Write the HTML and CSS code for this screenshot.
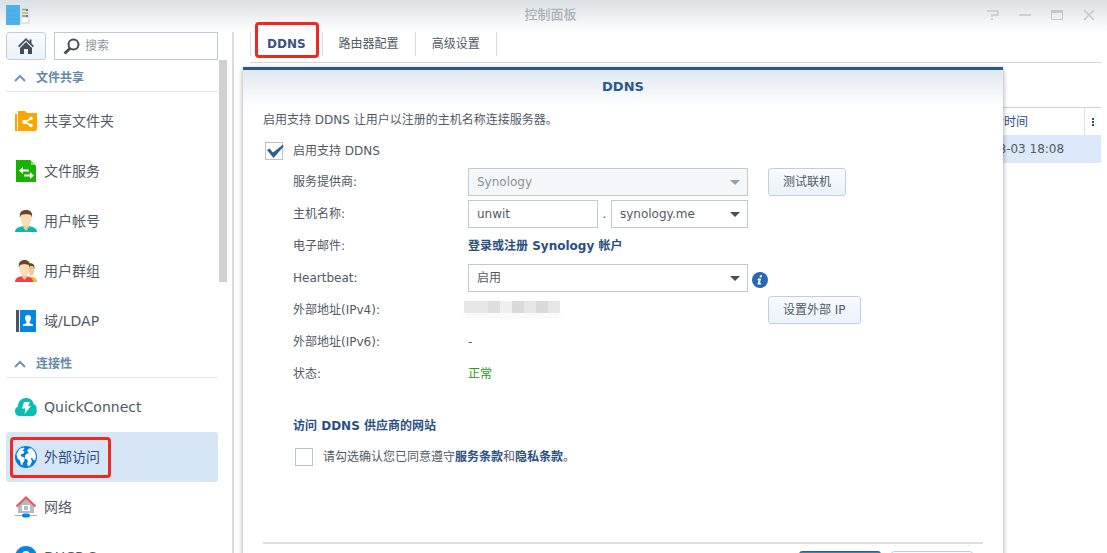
FILE: index.html
```html
<!DOCTYPE html>
<html lang="zh-CN">
<head>
    <meta charset="UTF-8">
    <meta name="viewport" content="width=device-width, initial-scale=1.0">
    <title>控制面板</title>
    <link rel="stylesheet" href="styles.css">
</head>
<body>
    <header class="titlebar">
        <svg class="app-icon" width="24" height="20" viewBox="0 0 24 20">
            <rect x="14" y="1" width="10" height="18" fill="#dfe5ea"/>
            <rect x="0" y="0" width="14" height="20" fill="#4db1ea"/>
            <path d="M2 5.500h9M2 10h9M2 14.500h9" stroke="#48a8e2"/>
            <path d="M16 4.500h4" stroke="#7fb36a" stroke-width="1.500"/>
            <path d="M16 8h6" stroke="#d9b25c" stroke-width="1.500"/>
            <path d="M16 11h4" stroke="#6a9cc4" stroke-width="1.500"/>
            <path d="M21 4v2M21 10v2" stroke="#5a7f9c" stroke-width="2"/>
            <rect x="16" y="13" width="6" height="4" fill="#fff"/>
        </svg>
        <h1 class="title">控制面板</h1>
        <div class="window-tools">
            <button class="tool" aria-label="帮助"><svg width="12" height="12" viewBox="0 0 12 12"><path d="M0 2h11v4H5v2M5 9v2" fill="none" stroke="#c3c8cc" stroke-width="1.500"/></svg></button>
            <button class="tool" aria-label="最小化"><svg width="12" height="12" viewBox="0 0 12 12"><path d="M0 6h12" stroke="#c3c8cc" stroke-width="1.500"/></svg></button>
            <button class="tool" aria-label="最大化"><svg width="12" height="12" viewBox="0 0 12 12"><path d="M.5 2v8.500h11V2" fill="none" stroke="#c3c8cc"/><path d="M0 2.500h12" stroke="#c3c8cc" stroke-width="3"/></svg></button>
            <button class="tool" aria-label="关闭"><svg width="12" height="12" viewBox="0 0 12 12"><path d="M1 1l10 10M11 1L1 11" stroke="#c3c8cc" stroke-width="1.500"/></svg></button>
        </div>
    </header>

    <div class="body">
        <aside class="sidebar">
            <div class="search-row">
                <button class="btn home" aria-label="主页">
                    <svg width="16" height="16" viewBox="0 0 16 16">
                        <path d="M8 0L0 8l1.200 1.200L8 2.500l6.800 6.700L16 8l-2.500-2.500V1.500h-2v2z" fill="#444e57"/>
                        <path d="M8 4L2 10v6h4v-5h4v5h4v-6z" fill="#444e57"/>
                    </svg>
                </button>
                <label class="search">
                    <svg width="17" height="17" viewBox="0 0 17 17"><circle cx="10.500" cy="6.500" r="5" fill="none" stroke="#444e57" stroke-width="2"/><path d="M7 10.500l-5.500 5" stroke="#444e57" stroke-width="3"/></svg>
                    <input type="text" placeholder="搜索" aria-label="搜索">
                </label>
            </div>
            <div class="list-wrap">
                <nav class="list">
                    <h2 class="group"><svg width="12" height="8" viewBox="0 0 12 8"><path d="M1 7l5-5 5 5" fill="none" stroke="#7595ad" stroke-width="2"/></svg>文件共享</h2>
                    <a class="item" href="#">
                        <svg width="22" height="22" viewBox="0 0 22 22"><path d="M0 4h2v16h19v1H0z" fill="#fba500"/><path d="M3 1h7l2 2h10v17H3z" fill="#fba500"/><path d="M16 8.500L10 12l6 3.500" fill="none" stroke="#fff" stroke-width="1.500"/><circle cx="9.500" cy="12" r="2.300" fill="#fff"/><circle cx="16" cy="8.500" r="1.800" fill="#fff"/><circle cx="16" cy="15.500" r="1.800" fill="#fff"/></svg>
                        <span>共享文件夹</span>
                    </a>
                    <a class="item" href="#">
                        <svg width="22" height="22" viewBox="0 0 22 22"><path d="M1 0h14l6 6v16H1z" fill="#1bb100"/><path d="M16 0l5 5h-5z" fill="#8ade78"/><path d="M4 10.500l4-3.500v2.500h6v2H8V14zM19 15.500l-4-3.500v2.500H9v2h6V19z" fill="#fff"/></svg>
                        <span>文件服务</span>
                    </a>
                    <a class="item" href="#">
                        <svg width="22" height="22" viewBox="0 0 22 22"><path d="M0 22c0-4 4-5 8-6h6c4 1 8 2 8 6z" fill="#11b5b0"/><path d="M8 13h6v4l-3 4-3-4z" fill="#f3c896"/><path d="M6 5h10v5c0 4-3 6-5 6s-5-2-5-6z" fill="#fbdcb4"/><path d="M5 8C4 2 7 0 11 0s7 2 6 8l-1-3c-3-1-7-1-10 0z" fill="#6a4526"/></svg>
                        <span>用户帐号</span>
                    </a>
                    <a class="item" href="#">
                        <svg width="22" height="22" viewBox="0 0 22 22"><path d="M13 17h5c3 1 4 2 4 5h-9z" fill="#f6b83c"/><path d="M13 6h6v5c0 3-2 5-4 5z" fill="#f3c896"/><path d="M13 4c4-2 7 0 6.500 5L18 6h-4z" fill="#6a4526"/><path d="M0 22c0-4 3-5 7-6h4c4 1 7 2 7 6z" fill="#f24048"/><path d="M7 13h5v4l-2.500 3L7 17z" fill="#f3c896"/><path d="M5 5h9v5c0 4-2.500 6-4.500 6S5 14 5 10z" fill="#fbdcb4"/><path d="M4 8C3 2 6 0 9.500 0S16 2 15 8l-1-3C11 4 8 4 5 5z" fill="#6a4526"/></svg>
                        <span>用户群组</span>
                    </a>
                    <a class="item" href="#">
                        <svg width="22" height="22" viewBox="0 0 22 22"><path d="M1 0h3v22H1z" fill="#4a5560"/><path d="M5 0h16v22H5z" fill="#0086e5"/><path d="M13 5c2 0 3 1 3 3s-1 3-1.500 4v1l3.500 1.500V16H8v-1.500l3.500-1.500v-1C11 11 10 10 10 8s1-3 3-3z" fill="#fff"/></svg>
                        <span>域/LDAP</span>
                    </a>
                    <h2 class="group"><svg width="12" height="8" viewBox="0 0 12 8"><path d="M1 7l5-5 5 5" fill="none" stroke="#7595ad" stroke-width="2"/></svg>连接性</h2>
                    <a class="item" href="#">
                        <svg width="22" height="22" viewBox="0 0 22 22"><path d="M5 20c-3 0-5-2-5-5 0-2 1-4 3-4.500C3 6 6 2 11 2c4 0 7 2 7.500 6C21 9 22 11 21.500 13c1 4-1 7-4.500 7z" fill="#08bdb4"/><path d="M9 6h6l-2 4h3l-6.500 8 1-5.500H7z" fill="#fff"/></svg>
                        <span>QuickConnect</span>
                    </a>
                    <a class="item active" href="#">
                        <svg width="22" height="22" viewBox="0 0 22 22"><circle cx="11" cy="11" r="11" fill="#0080dd"/><path d="M1.500 8l3-5 4-1.500 1 1-2 2 2 1-1 2-3 1 1 2 3 1v3l-2 3v2l-1.500-1-1-4-2.500-2zM12 4.500l2-2 3 0 3 4 1 4-1 4-2-1-1-2-1 1 1 3-2 4-2 1-1-3 1-2-1-2-2-1v-3l2-2 2 0z" fill="#fff"/></svg>
                        <span>外部访问</span>
                        <i class="mark mark-item"></i>
                    </a>
                    <a class="item" href="#">
                        <svg width="22" height="22" viewBox="0 0 22 22"><path d="M3 9l8-7 8 7v8H3z" fill="#b5bbc2"/><path d="M7 9h8v6H7z" fill="#fff"/><path d="M9 10h4v4H9z" fill="#b5bbc2"/><path d="M1.500 10.500L11 1.500l9.500 9" fill="none" stroke="#f0525a" stroke-width="2"/><path d="M0 19.500h22" stroke="#aab0b7"/><rect x="7" y="17.500" width="8" height="4" rx="2" fill="#0086e5"/></svg>
                        <span>网络</span>
                    </a>
                    <a class="item" href="#">
                        <svg width="22" height="22" viewBox="0 0 22 22"><circle cx="11" cy="11" r="11" fill="#0086e5"/><circle cx="11" cy="9" r="4" fill="#fff"/></svg>
                        <span>DHCP Server</span>
                    </a>
                </nav>
                <div class="scroll-thumb"></div>
            </div>
        </aside>

        <main class="main">
            <div class="tabs">
                <button class="tab current">DDNS<i class="mark mark-tab"></i></button>
                <button class="tab">路由器配置</button>
                <button class="tab">高级设置</button>
            </div>
            <table class="records">
                <thead>
                    <tr><th></th><th class="time">上次更新时间</th><th class="more"><svg width="4" height="10" viewBox="0 0 4 10"><path d="M1 1h2v2H1zM1 4h2v2H1zM1 7h2v2H1z" fill="#2a4f7c"/></svg></th></tr>
                </thead>
                <tbody>
                    <tr><td></td><td colspan="2">2020-08-03 18:08</td></tr>
                </tbody>
            </table>

            <form class="dialog" role="dialog" aria-labelledby="dialog-title">
                <h2 class="dialog-title" id="dialog-title">DDNS</h2>
                <p class="desc">启用支持 DDNS 让用户以注册的主机名称连接服务器。</p>
                <label class="check">
                    <span class="box"><input type="checkbox" checked><svg width="20" height="18" viewBox="0 0 20 18"><path d="M2 8l2.500-1.500L8 10.500 17.500 3l1.500 1L8.500 16z" fill="#2d5d98"/></svg></span>
                    启用支持 DDNS
                </label>

                <div class="fields">
                    <div class="field">
                        <label for="provider">服务提供商:</label>
                        <div class="control"><span class="select disabled"><select id="provider" disabled><option>Synology</option></select></span></div>
                        <button type="button" class="btn">测试联机</button>
                    </div>
                    <div class="field">
                        <label for="host">主机名称:</label>
                        <div class="control host">
                            <input class="text" id="host" type="text" value="unwit">
                            <span>.</span>
                            <span class="select"><select aria-label="域名"><option>synology.me</option></select></span>
                        </div>
                    </div>
                    <div class="field">
                        <span>电子邮件:</span>
                        <a class="link" href="#">登录或注册 Synology 帐户</a>
                    </div>
                    <div class="field">
                        <label for="heartbeat">Heartbeat:</label>
                        <div class="control"><span class="select"><select id="heartbeat"><option>启用</option></select></span></div>
                        <svg class="info" width="16" height="16" viewBox="0 0 16 16"><circle cx="8" cy="8" r="8" fill="#2868b4"/><path d="M8 3.200h2l-.4 2h-2zM6 6.500h3L8 11h1.200l-.3 1.500H5.500L6.400 8H5.700z" fill="#fff"/></svg>
                    </div>
                    <div class="field">
                        <span>外部地址(IPv4):</span>
                        <div class="control"><span class="mosaic"><i></i><i></i><i></i><i></i><i></i><i></i><i></i><i></i></span></div>
                        <button type="button" class="btn">设置外部 IP</button>
                    </div>
                    <div class="field">
                        <span>外部地址(IPv6):</span>
                        <span>-</span>
                    </div>
                    <div class="field">
                        <span>状态:</span>
                        <span class="ok">正常</span>
                    </div>
                </div>

                <div class="terms">
                    <a class="link" href="#">访问 DDNS 供应商的网站</a>
                    <div class="check">
                        <span class="box"><input type="checkbox" id="agree"></span>
                        <label for="agree">请勾选确认您已同意遵守<a class="link" href="#">服务条款</a>和<a class="link" href="#">隐私条款</a>。</label>
                    </div>
                </div>

                <div class="actions">
                    <button type="submit" class="btn primary">确定</button>
                    <button type="button" class="btn">取消</button>
                </div>
            </form>
        </main>
    </div>
</body>
</html>
```

FILE: styles.css
```css
* {
    box-sizing: border-box;
}
body {
    margin: 0;
    height: 100vh;
    overflow: hidden;
    display: flex;
    flex-direction: column;
    background: white;
    color: #505a64;
    font-family: "DejaVu Sans", "Noto Sans CJK SC", sans-serif;
    font-size: 12px;
    line-height: 20px;
}
h1, h2, p {
    margin: 0;
}
button, input, select {
    font: inherit;
    color: inherit;
}
a {
    color: inherit;
    text-decoration: none;
}
svg {
    flex: none;
    display: block;
}

/* title bar */
.titlebar {
    flex: none;
    height: 32px;
    padding: 0 12px 2px 6px;
    display: grid;
    grid-template-columns: 1fr auto 1fr;
    align-items: center;
    background: linear-gradient(#dbe0e4, #fff);
}
.title {
    font-size: 13px;
    font-weight: 500;
    color: #aab1b8;
}
.window-tools {
    display: flex;
    justify-content: flex-end;
    gap: 20px;
}
.tool {
    padding: 0;
    border: none;
    background: none;
}

.body {
    flex: 1;
    min-height: 0;
    display: flex;
}

/* sidebar */
.sidebar {
    flex: none;
    width: 234px;
    padding-left: 6px;
    border-right: 2px solid #dcdcdc;
    display: flex;
    flex-direction: column;
}
.search-row {
    flex: none;
    display: flex;
    gap: 8px;
    padding-right: 14px;
}
.btn {
    height: 28px;
    padding: 0 14px;
    border: 1px solid #c0cfdd;
    border-radius: 3px;
    background: linear-gradient(#f8fbfe, #eaf2fa);
}
.home {
    width: 40px;
    padding: 0 11px;
}
.search {
    flex: 1;
    min-width: 0;
    display: flex;
    align-items: center;
    gap: 5px;
    height: 28px;
    padding: 0 8px;
    border: 1px solid #c0c8d0;
}
.search input {
    width: 100%;
    min-width: 0;
    padding: 0;
    border: none;
    outline: none;
    background: none;
}
.search input::placeholder {
    color: #8f989f;
}
.list-wrap {
    flex: 1;
    min-height: 0;
    display: flex;
    gap: 1px;
}
.list {
    width: 212px;
    overflow: hidden;
}
.scroll-thumb {
    width: 8px;
    height: 45%;
    background: #d0d0d0;
}
.group {
    display: flex;
    align-items: center;
    gap: 10px;
    height: 32px;
    margin-bottom: 4px;
    padding: 4px 8px 0;
    border-bottom: 1px solid #e0e6eb;
    font-size: 12px;
    font-weight: bold;
    color: #6489a6;
}
.item {
    position: relative;
    display: flex;
    align-items: center;
    gap: 7px;
    height: 50px;
    padding: 0 9px;
    border-radius: 3px;
    font-size: 14px;
}
.item.active {
    background: #d7e6f7;
    color: #2e4f86;
}

/* highlight frames */
.mark {
    position: absolute;
    border: 3px solid #ec2a22;
    border-radius: 4px;
    pointer-events: none;
}
.mark-item {
    top: 5px;
    bottom: 4px;
    left: 4px;
    width: 101px;
}
.mark-tab {
    top: -10px;
    right: 3px;
    bottom: -2px;
    left: 4px;
}

/* main */
.main {
    flex: 1;
    min-width: 0;
    position: relative;
    padding: 0 6px 0 16px;
}
.tabs {
    display: flex;
    height: 31px;
    padding-bottom: 7px;
    border-bottom: 1px solid #d0d4d8;
}
.tab {
    position: relative;
    height: 24px;
    padding: 0 16px;
    border: none;
    border-right: 1px solid #d8dcdf;
    background: none;
}
.tab.current {
    border-left: 1px solid #d8dcdf;
    font-weight: bold;
    color: #3a5088;
}
.records {
    width: 100%;
    margin-top: 44px;
    border-top: 1px solid #d0d4d8;
    border-spacing: 0;
    table-layout: fixed;
}
.records th,
.records td {
    height: 27px;
    padding: 0 10px;
    overflow: hidden;
    white-space: nowrap;
    text-align: left;
}
.records th {
    font-weight: normal;
    color: #2a4f7c;
}
.records td {
    height: 28px;
    background: #dce9f8;
}
.records .time {
    width: 138px;
}
.records .more {
    width: 17px;
    padding: 0 6px;
    border-left: 1px solid #dfe3e6;
}

/* dialog */
.dialog {
    position: absolute;
    top: 35px;
    right: 104px;
    left: 9px;
    padding: 0 20px 20px;
    border-top: 3px solid #2a5884;
    background: white linear-gradient(#dfe8f0, #fff) no-repeat;
    background-size: 100% 36px;
    box-shadow: 0 2px 5px rgba(0,0,0,0.4);
}
.dialog-title {
    height: 34px;
    line-height: 34px;
    font-size: 13px;
    text-align: center;
    color: #2a588c;
}
.desc {
    padding: 6px 0 11px;
}
.check {
    display: flex;
    align-items: center;
    gap: 9px;
    padding-left: 2px;
}
.box {
    position: relative;
    width: 19px;
    height: 18px;
}
.box input {
    appearance: none;
    display: block;
    width: 18px;
    height: 18px;
    margin: 0;
    border: 1px solid #bcc5cd;
    background: white;
}
.box svg {
    position: absolute;
    top: 0;
    left: 0;
}
.fields {
    padding: 5px 0 0 30px;
}
.field {
    display: grid;
    grid-template-columns: 175px 280px auto;
    justify-content: start;
    align-items: center;
    height: 32px;
}
.field .btn {
    margin-left: 20px;
}
.info {
    margin: 4px 0 0 4px;
}
.text,
.select select {
    width: 100%;
    height: 28px;
    padding: 0 8px;
    border: 1px solid #c0c8d0;
    border-radius: 0;
    background: white;
    appearance: none;
}
.select {
    position: relative;
    display: block;
}
.select::after {
    content: "";
    position: absolute;
    top: 12px;
    right: 8px;
    border: 5px solid transparent;
    border-top-color: #454e57;
    border-bottom: none;
    pointer-events: none;
}
.select.disabled select {
    background: #f4f7fa;
    color: #8a9299;
    opacity: 1;
}
.select.disabled::after {
    border-top-color: #989fa5;
}
.host {
    display: grid;
    grid-template-columns: 130px auto 137px;
    justify-content: space-between;
    align-items: center;
}
.link {
    font-weight: bold;
    color: #2a4f82;
}
.ok {
    color: #2a9a1e;
}
.mosaic {
    display: flex;
    width: 96px;
    height: 12px;
    margin: -6px 0 0 -4px;
    box-shadow: 0 6px 3px #fafafa;
}
.mosaic i {
    flex: 1;
    background: #e6e6e6;
}
.mosaic i:nth-child(3) {
    background: #dedede;
}
.mosaic i:nth-child(4) {
    background: #f0f0f0;
}
.mosaic i:nth-child(5),
.mosaic i:nth-child(7) {
    background: #dadada;
}
.terms {
    padding: 26px 0 0 30px;
}
.terms .check {
    padding-top: 11px;
}
.actions {
    display: flex;
    justify-content: flex-end;
    gap: 10px;
    margin-top: 75px;
    padding: 7px 10px 0 0;
    border-top: 2px solid #dedfe0;
}
.actions .btn {
    width: 82px;
}
.actions .primary {
    border-color: #2a5f9c;
    background: #3b7fc4;
    color: white;
}
```
